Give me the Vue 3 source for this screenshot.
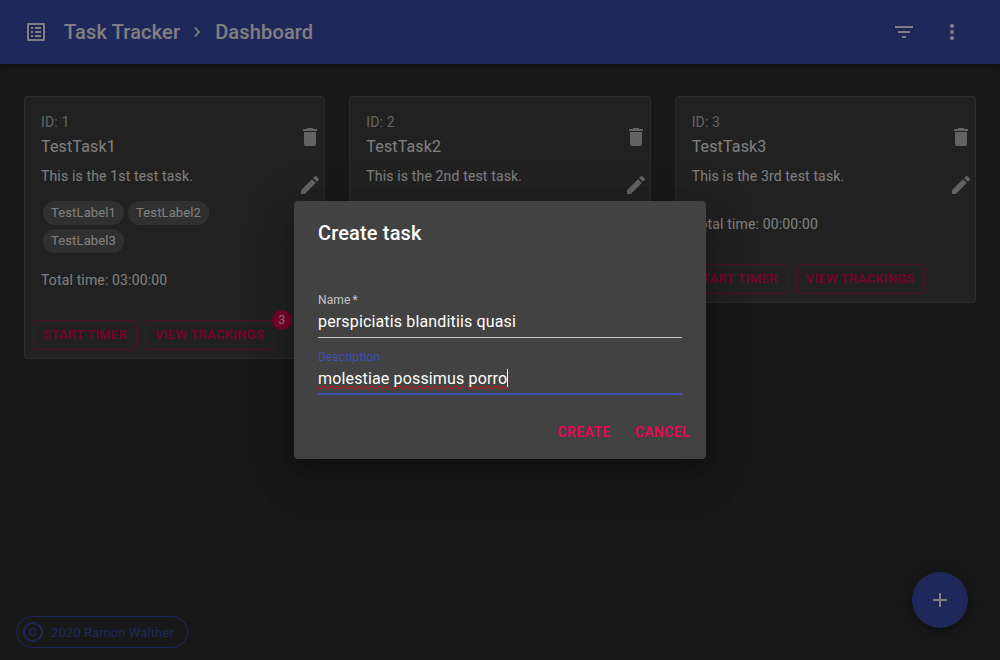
<template>
  <div class="page">
    <header class="appbar">
      <svg class="icon" viewBox="0 0 24 24"><path :d="icons.listAlt" /></svg>
      <h1 class="crumb first">Task Tracker</h1>
      <svg class="icon chevron" viewBox="0 0 24 24"><path :d="icons.chevron" /></svg>
      <h1 class="crumb">Dashboard</h1>
      <div class="spacer"></div>
      <svg class="icon" viewBox="0 0 24 24"><path :d="icons.filter" /></svg>
      <svg class="icon more" viewBox="0 0 24 24"><path :d="icons.more" /></svg>
    </header>

    <main class="grid">
      <div v-for="task in tasks" :key="task.id" class="card">
        <div class="card-body">
          <div class="card-text">
            <div class="task-id">ID: {{ task.id }}</div>
            <div class="task-name">{{ task.name }}</div>
            <p class="task-desc">{{ task.description }}</p>
            <div class="chips">
              <span v-for="label in task.labels" :key="label" class="chip">{{ label }}</span>
            </div>
            <div class="task-time">Total time: {{ task.time }}</div>
          </div>
          <div class="card-tools">
            <svg class="icon" viewBox="0 0 24 24"><path :d="icons.trash" /></svg>
            <svg class="icon" viewBox="0 0 24 24"><path :d="icons.edit" /></svg>
          </div>
        </div>
        <div class="card-actions">
          <button class="btn-outline">Start timer</button>
          <div class="badge-wrap">
            <button class="btn-outline">View trackings</button>
            <span v-if="task.trackings" class="badge">{{ task.trackings }}</span>
          </div>
        </div>
      </div>
    </main>

    <div class="copyright">
      <svg class="icon" viewBox="0 0 24 24"><path :d="icons.copyright" /></svg>
      <span>2020 Ramon Walther</span>
    </div>

    <button class="fab">
      <svg class="icon" viewBox="0 0 24 24"><path :d="icons.add" /></svg>
    </button>

    <div class="backdrop">
      <div class="dialog">
        <h2 class="dialog-title">Create task</h2>
        <div class="dialog-content">
          <div class="field">
            <label class="field-label">Name<span class="star">*</span></label>
            <div class="field-input">perspiciatis blanditiis quasi</div>
          </div>
          <div class="field focused">
            <label class="field-label">Description</label>
            <div class="field-input"><span class="typo">molestiae</span> <span class="typo">possimus</span> <span class="typo">porro</span><span class="caret"></span></div>
          </div>
        </div>
        <div class="dialog-actions">
          <button class="btn-text">Create</button>
          <button class="btn-text">Cancel</button>
        </div>
      </div>
    </div>
  </div>
</template>

<script setup>
const icons = {
  listAlt: 'M19 5v14H5V5h14m1.1-2H3.9c-.5 0-.9.4-.9.9v16.2c0 .4.4.9.9.9h16.2c.4 0 .9-.5.9-.9V3.9c0-.5-.5-.9-.9-.9zM11 7h6v2h-6V7zm0 4h6v2h-6v-2zm0 4h6v2h-6zM7 7h2v2H7zm0 4h2v2H7zm0 4h2v2H7z',
  chevron: 'M10 6L8.59 7.41 13.17 12l-4.58 4.59L10 18l6-6z',
  filter: 'M10 18h4v-2h-4v2zM3 6v2h18V6H3zm3 7h12v-2H6v2z',
  more: 'M12 8c1.1 0 2-.9 2-2s-.9-2-2-2-2 .9-2 2 .9 2 2 2zm0 2c-1.1 0-2 .9-2 2s.9 2 2 2 2-.9 2-2-.9-2-2-2zm0 6c-1.1 0-2 .9-2 2s.9 2 2 2 2-.9 2-2-.9-2-2-2z',
  trash: 'M6 19c0 1.1.9 2 2 2h8c1.1 0 2-.9 2-2V7H6v12zM19 4h-3.5l-1-1h-5l-1 1H5v2h14V4z',
  edit: 'M3 17.25V21h3.75L17.81 9.94l-3.75-3.75L3 17.25zM20.71 7.04c.39-.39.39-1.02 0-1.41l-2.34-2.34c-.39-.39-1.02-.39-1.41 0l-1.83 1.83 3.75 3.75 1.83-1.83z',
  add: 'M19 13h-6v6h-2v-6H5v-2h6V5h2v6h6v2z',
  copyright: 'M10.08 10.86c.05-.33.16-.62.3-.87s.34-.46.59-.62c.24-.15.54-.22.91-.23.23.01.44.05.63.13.2.09.38.21.52.36s.25.33.34.53.13.42.14.64h1.79c-.02-.47-.11-.9-.28-1.29s-.4-.73-.7-1.01-.66-.5-1.08-.66-.88-.23-1.39-.23c-.65 0-1.22.11-1.7.34s-.88.53-1.2.92-.56.84-.71 1.36-.24 1.06-.24 1.65v.27c0 .59.08 1.13.24 1.65s.39.97.71 1.35.72.69 1.2.91c.48.22 1.05.34 1.7.34.47 0 .91-.08 1.32-.23s.77-.36 1.08-.63.56-.58.74-.94.29-.74.3-1.15h-1.79c-.01.21-.06.4-.15.58s-.21.33-.36.46-.32.23-.52.3c-.19.07-.39.09-.6.1-.36-.01-.66-.08-.89-.23-.25-.16-.45-.37-.59-.62s-.25-.55-.3-.88-.08-.67-.08-1v-.27c0-.35.03-.68.08-1.01zM12 2C6.48 2 2 6.48 2 12s4.48 10 10 10 10-4.48 10-10S17.52 2 12 2zm0 18c-4.41 0-8-3.59-8-8s3.59-8 8-8 8 3.59 8 8-3.59 8-8 8z'
}

const tasks = [
  { id: 1, name: 'TestTask1', description: 'This is the 1st test task.', labels: ['TestLabel1', 'TestLabel2', 'TestLabel3'], time: '03:00:00', trackings: 3 },
  { id: 2, name: 'TestTask2', description: 'This is the 2nd test task.', labels: [], time: '00:00:00', trackings: 0 },
  { id: 3, name: 'TestTask3', description: 'This is the 3rd test task.', labels: [], time: '00:00:00', trackings: 0 }
]
</script>

<style>
html, body {
  margin: 0;
  background: #303030;
}
</style>

<style scoped>
.page {
  position: relative;
  height: 660px;
  overflow: hidden;
  background: #303030;
  color: #fff;
  font-family: Roboto, "Liberation Sans", sans-serif;
  font-size: 14px;
  letter-spacing: .01071em;
}
.icon {
  display: block;
  width: 24px;
  height: 24px;
  fill: currentColor;
  flex-shrink: 0;
}

/* Header */
.appbar {
  display: flex;
  align-items: center;
  height: 64px;
  padding: 0 36px 0 24px;
  background: #3f51b5;
  box-shadow: 0 2px 4px -1px rgba(0,0,0,.2), 0 4px 5px 0 rgba(0,0,0,.14), 0 1px 10px 0 rgba(0,0,0,.12);
}
.crumb {
  margin: 0;
  font-size: 20px;
  font-weight: 500;
  line-height: 32px;
  letter-spacing: .0075em;
}
.crumb.first {
  margin-left: 16px;
}
.chevron {
  width: 20px;
  height: 20px;
  margin: 0 8px 0 7px;
}
.spacer {
  flex: 1;
}
.more {
  margin-left: 24px;
}

/* Cards */
.grid {
  display: grid;
  grid-template-columns: repeat(3, 1fr);
  gap: 24px;
  align-items: start;
  padding: 32px 24px;
}
.card {
  background: #424242;
  border: 1px solid rgba(255,255,255,.12);
  border-radius: 4px;
}
.card-body {
  display: flex;
}
.card-text {
  flex: 1;
  min-width: 0;
  padding: 15px 24px 22px 16px;
}
.card-tools {
  display: flex;
  flex-direction: column;
  gap: 24px;
  padding: 28px 2px 0 0;
  color: rgba(255,255,255,.7);
}
.task-id {
  line-height: 20px;
  color: rgba(255,255,255,.7);
}
.task-name {
  margin-top: 3px;
  font-size: 16px;
  line-height: 24px;
  letter-spacing: .00938em;
}
.task-desc {
  margin: 7px 0 13px;
  line-height: 20px;
}
.chips {
  display: flex;
  flex-wrap: wrap;
}
.chip {
  margin: 2px;
  padding: 0 8px;
  height: 24px;
  line-height: 24px;
  border-radius: 12px;
  background: #616161;
  font-size: 13px;
  letter-spacing: .01em;
}
.task-time {
  margin-top: 15px;
  line-height: 20px;
}
.card-actions {
  display: flex;
  gap: 8px;
  padding: 8px;
}
.badge-wrap {
  position: relative;
}
.badge {
  position: absolute;
  top: -10px;
  right: -18px;
  width: 20px;
  height: 20px;
  line-height: 20px;
  border-radius: 50%;
  background: #f50057;
  text-align: center;
  font-size: 12px;
}
button {
  font-family: inherit;
  cursor: pointer;
}
.btn-outline {
  display: block;
  padding: 3px 9px;
  background: none;
  border: 1px solid rgba(245,0,87,.5);
  border-radius: 4px;
  color: #f50057;
  font-size: 13px;
  font-weight: 500;
  line-height: 22px;
  letter-spacing: .3px;
  text-transform: uppercase;
}

/* Bottom corners */
.copyright {
  position: absolute;
  left: 16px;
  bottom: 12px;
  display: flex;
  align-items: center;
  gap: 6px;
  height: 30px;
  padding: 0 13px 0 4px;
  border: 1px solid #3f51b5;
  border-radius: 16px;
  color: #3f51b5;
  font-size: 13px;
  letter-spacing: .1px;
}
.fab {
  position: absolute;
  right: 32px;
  bottom: 32px;
  display: flex;
  align-items: center;
  justify-content: center;
  width: 56px;
  height: 56px;
  padding: 0;
  border: none;
  border-radius: 50%;
  background: #3f51b5;
  color: #fff;
  box-shadow: 0 3px 5px -1px rgba(0,0,0,.2), 0 6px 10px 0 rgba(0,0,0,.14), 0 1px 18px 0 rgba(0,0,0,.12);
}

/* Dialog */
.backdrop {
  position: absolute;
  inset: 0;
  display: flex;
  align-items: center;
  justify-content: center;
  background: rgba(0,0,0,.5);
}
.dialog {
  width: 412px;
  background: #424242;
  border-radius: 4px;
  box-shadow: 0 11px 15px -7px rgba(0,0,0,.2), 0 24px 38px 3px rgba(0,0,0,.14), 0 9px 46px 8px rgba(0,0,0,.12);
}
.dialog-title {
  margin: 0;
  padding: 16px 24px;
  font-size: 20px;
  font-weight: 500;
  line-height: 32px;
  letter-spacing: .0075em;
}
.dialog-content {
  padding: 27px 24px 11px;
}
.field + .field {
  margin-top: 11px;
}
.field-label {
  display: block;
  height: 16px;
  font-size: 12px;
  line-height: 16px;
  letter-spacing: .00938em;
  color: rgba(255,255,255,.7);
}
.star {
  margin-left: 2px;
}
.field-input {
  margin-top: 2px;
  padding-bottom: 3px;
  font-size: 16px;
  line-height: 24px;
  letter-spacing: .00938em;
  border-bottom: 1px solid rgba(255,255,255,.7);
}
.focused .field-label {
  color: #3f51b5;
}
.focused .field-input {
  padding-bottom: 2px;
  border-bottom: 2px solid #3f51b5;
}
.typo {
  text-decoration: underline wavy #f00 1px;
  text-decoration-skip-ink: none;
  text-underline-offset: 1px;
}
.caret {
  display: inline-block;
  width: 1px;
  height: 18px;
  background: #fff;
  vertical-align: -3px;
}
.dialog-actions {
  display: flex;
  justify-content: flex-end;
  gap: 8px;
  padding: 8px 8px 9px;
}
.btn-text {
  padding: 6px 8px;
  background: none;
  border: none;
  color: #f50057;
  font-size: 14px;
  font-weight: 500;
  line-height: 24px;
  letter-spacing: .02857em;
  text-transform: uppercase;
}
</style>
